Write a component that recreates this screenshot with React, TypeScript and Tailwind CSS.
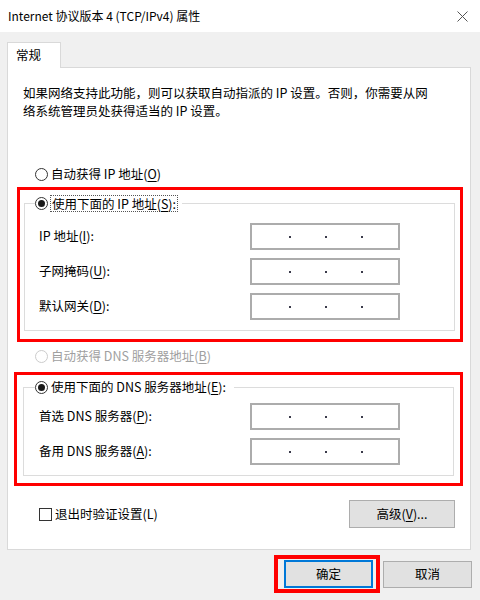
import type { ReactNode } from 'react';

function U({ children }: { children: ReactNode }) {
  return <span className="underline underline-offset-2">{children}</span>;
}

function Radio({ checked = false, disabled = false }: { checked?: boolean; disabled?: boolean }) {
  return (
    <span
      className={
        'flex h-[13px] w-[13px] shrink-0 items-center justify-center rounded-full border bg-white ' +
        (disabled ? 'border-[#cccccc]' : 'border-[#333333]')
      }
    >
      {checked && <span className="h-[7px] w-[7px] rounded-full bg-[#1a1a1a]" />}
    </span>
  );
}

/** IP 地址输入框，三个点分隔 */
function IpBox() {
  return (
    <div className="flex h-[27px] w-[150px] items-center gap-[34px] border-2 border-[#acacac] bg-white pl-[37px]">
      <span className="h-[2px] w-[2px] bg-[#3a3a4a]" />
      <span className="h-[2px] w-[2px] bg-[#3a3a4a]" />
      <span className="h-[2px] w-[2px] bg-[#3a3a4a]" />
    </div>
  );
}

function Row({ label }: { label: ReactNode }) {
  return (
    <div className="flex h-[27px] items-center pl-[14px]">
      <span className="w-[211px]">{label}</span>
      <IpBox />
    </div>
  );
}

function Button({ children, primary = false, className = '' }: { children: ReactNode; primary?: boolean; className?: string }) {
  return (
    <div
      className={
        'flex items-center justify-center bg-[#e1e1e1] ' +
        (primary ? 'border-2 border-[#0078d7] ' : 'border border-[#adadad] ') +
        className
      }
    >
      {children}
    </div>
  );
}

export default function App() {
  return (
    <div className="flex h-[600px] w-[480px] flex-col overflow-hidden bg-[#f0f0f0] font-['Noto_Sans_CJK_SC','Noto_Sans',sans-serif] text-[12.5px] text-black">
      {/* 标题栏 */}
      <div className="flex h-[32px] shrink-0 items-center justify-between bg-white pl-2 pr-[12px]">
        <span className="text-[12px]">Internet 协议版本 4 (TCP/IPv4) 属性</span>
        <svg width="11" height="11" viewBox="0 0 11 11" className="text-[#555]">
          <path d="M0.5 0.5L10.5 10.5M10.5 0.5L0.5 10.5" stroke="currentColor" strokeWidth="1" />
        </svg>
      </div>

      <div className="flex flex-col px-[7px] pt-[10px]">
        {/* 选项卡 */}
        <div className="relative z-10 -mb-px flex h-[26px] w-[54px] items-start border border-b-0 border-[#d9d9d9] bg-white pl-[8px] pt-[3px]">
          常规
        </div>

        {/* 面板 */}
        <div className="flex h-[483px] w-[464px] flex-col border border-[#d9d9d9] bg-white">
          <p className="ml-[15px] mt-[16px] leading-[18px]">
            如果网络支持此功能，则可以获取自动指派的 IP 设置。否则，你需要从网
            <br />
            络系统管理员处获得适当的 IP 设置。
          </p>

          <div className="ml-[27px] mt-[46px] flex h-4 items-center gap-[3px]">
            <Radio />
            <span>
              自动获得 IP 地址(<U>O</U>)
            </span>
          </div>

          {/* IP 地址 */}
          <div className="ml-[9px] mt-[5px] w-[446px] border-[3px] border-[#ff0000] pb-[8px] pl-[4px] pr-[5px] pt-[13px]">
            <div className="flex flex-col border border-[#dcdcdc] pb-[10px]">
              <div className="-mt-[9px] ml-[10px] flex w-fit items-center gap-[2px] bg-white pr-1">
                <Radio checked />
                <span className="border border-dotted border-[#555] px-px leading-[15px]">
                  使用下面的 IP 地址(<U>S</U>):
                </span>
              </div>
              <div className="mt-[11px] flex flex-col gap-[8px]">
                <Row label={<>IP 地址(<U>I</U>):</>} />
                <Row label={<>子网掩码(<U>U</U>):</>} />
                <Row label={<>默认网关(<U>D</U>):</>} />
              </div>
            </div>
          </div>

          <div className="ml-[27px] mt-[6px] flex h-4 items-center gap-[3px] text-[#a0a0a0]">
            <Radio disabled />
            <span>
              自动获得 DNS 服务器地址(<U>B</U>)
            </span>
          </div>

          {/* DNS */}
          <div className="ml-[6px] mt-[8px] w-[449px] border-[3px] border-[#ff0000] pb-[7px] pl-[6px] pr-[6px] pt-[12px]">
            <div className="flex flex-col border border-[#dcdcdc] pb-[10px]">
              <div className="-mt-[9px] ml-[11px] flex w-fit items-center gap-[3px] bg-white pr-2">
                <Radio checked />
                <span className="leading-[16px]">
                  使用下面的 DNS 服务器地址(<U>E</U>):
                </span>
              </div>
              <div className="mt-[8px] flex flex-col gap-[8px] pl-px">
                <Row label={<>首选 DNS 服务器(<U>P</U>):</>} />
                <Row label={<>备用 DNS 服务器(<U>A</U>):</>} />
              </div>
            </div>
          </div>

          <div className="ml-[31px] mr-[15px] mt-[14px] flex items-center justify-between">
            <div className="flex items-center gap-[3px]">
              <span className="h-[13px] w-[13px] border border-[#333333] bg-white" />
              <span>退出时验证设置(L)</span>
            </div>
            <Button className="h-[28px] w-[106px]">
              高级(<U>V</U>)...
            </Button>
          </div>
        </div>
      </div>

      {/* 底部按钮 */}
      <div className="mt-[5px] flex items-center justify-end gap-[3px] pr-[8px]">
        <div className="border-4 border-[#ff0000] py-px pl-[6px] pr-[3px]">
          <Button primary className="h-[28px] w-[89px]">
            确定
          </Button>
        </div>
        <Button className="h-[27px] w-[89px]">取消</Button>
      </div>
    </div>
  );
}
